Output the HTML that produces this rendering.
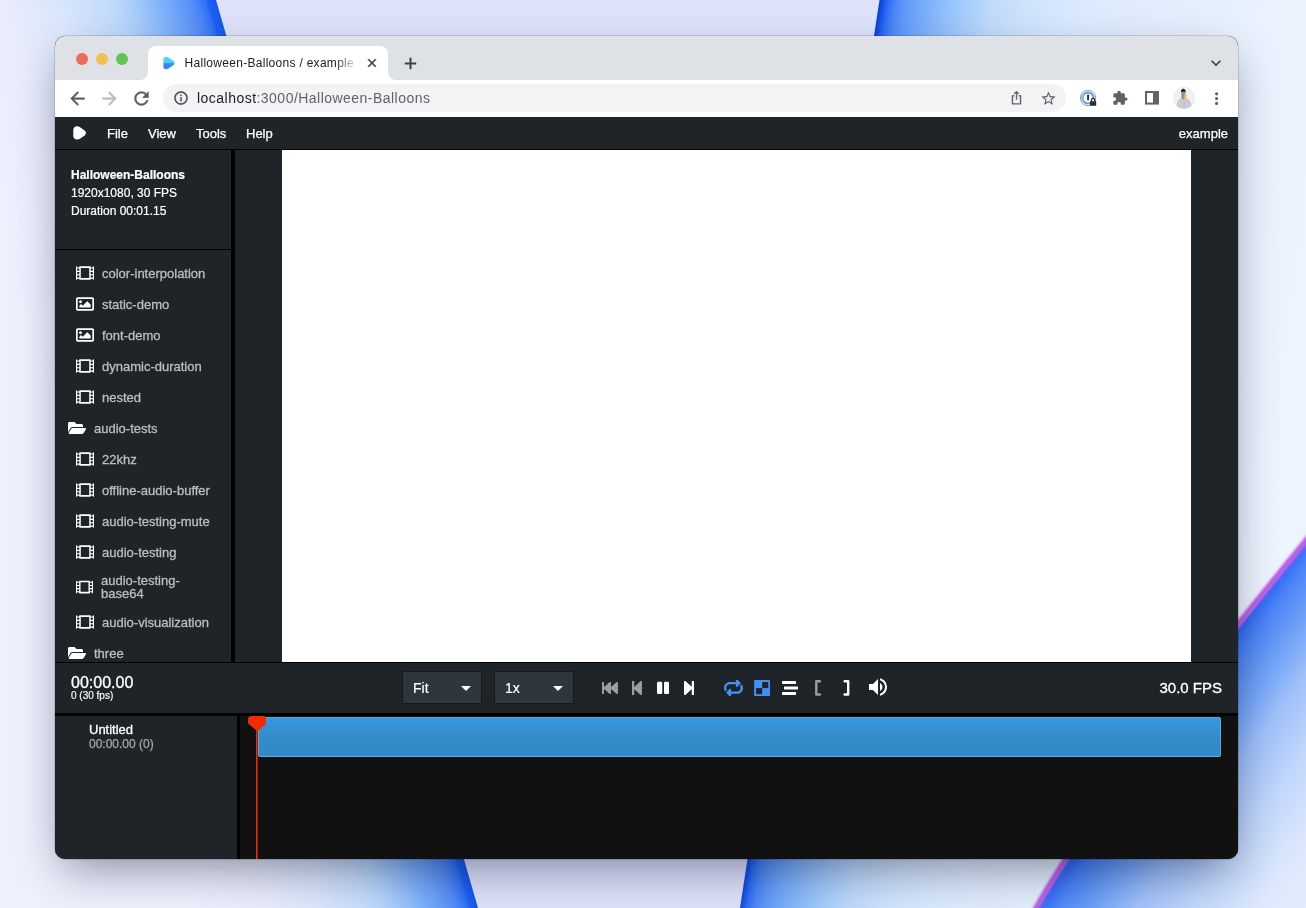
<!DOCTYPE html>
<html>
<head>
<meta charset="utf-8">
<style>
*{box-sizing:border-box;margin:0;padding:0}
html,body{width:1306px;height:908px;overflow:hidden;background:#e6eafc;font-family:"Liberation Sans",sans-serif;}
.abs{position:absolute}
#wall{position:absolute;left:0;top:0;width:1306px;height:908px}
#win{will-change:transform;position:absolute;left:55px;top:36px;width:1183px;height:823px;border-radius:10px;overflow:hidden;background:#1f2428;box-shadow:0 0 0 0.5px rgba(0,0,0,.25),0 17px 46px -8px rgba(0,8,32,.43);}
/* chrome */
#tabstrip{position:absolute;left:0;top:0;width:1183px;height:44px;background:#dee1e6}
#toolbar{position:absolute;left:0;top:44px;width:1183px;height:37px;background:#fff}
.dot{position:absolute;top:17px;width:12px;height:12px;border-radius:50%}
#tab{position:absolute;left:93px;top:10px;width:240px;height:34px;background:#fff;border-radius:8px 8px 0 0}
#tab:before,#tab:after{content:"";position:absolute;bottom:0;width:8px;height:8px;background:radial-gradient(circle at 0 0,rgba(255,255,255,0) 7.5px,#fff 8.5px)}
#tab:before{left:-8px}
#tab:after{right:-8px;transform:scaleX(-1)}
#tabtitle{position:absolute;left:36.5px;top:10px;font-size:12px;color:#202124;white-space:nowrap;width:176px;overflow:hidden;letter-spacing:0.29px;-webkit-mask-image:linear-gradient(to right,#000 150px,transparent 174px);mask-image:linear-gradient(to right,#000 150px,transparent 174px)}
#omni{position:absolute;left:108px;top:48px;width:903px;height:28px;border-radius:14px;background:#f1f3f4}
#url{position:absolute;left:142px;top:54px;font-size:14px;color:#5f6368;white-space:nowrap;letter-spacing:0.47px}
#url b{font-weight:normal;color:#202124}
/* app */
#menubar{position:absolute;left:0;top:81px;width:1183px;height:33px;background:#1f2428;border-bottom:1px solid #000}
.menu{position:absolute;top:9px;font-size:13px;color:#fff;white-space:nowrap;-webkit-text-stroke:0.25px #fff}
#sidebar{position:absolute;left:0;top:114px;width:176px;height:512px;background:#1f2428}
#sidehead{position:absolute;left:0;top:0;width:176px;height:100px;border-bottom:1px solid #000}
#sidehead div{position:absolute;left:16px;font-size:12px;color:#fff;white-space:nowrap;line-height:14px;-webkit-text-stroke:0.2px #fff}
.item{position:absolute;left:47px;font-size:13px;color:#bcbec1;white-space:nowrap;line-height:13px;-webkit-text-stroke:0.3px #bcbec1}
.item.f{left:39px}
.ico{position:absolute;left:21px;width:18px;height:18px;fill:#fff}
.ico.fo{left:13px}
#split1{position:absolute;left:176px;top:114px;width:4px;height:512px;background:#000}
#canvasarea{position:absolute;left:180px;top:114px;width:1003px;height:512px;background:#1f2428}
#canvas{position:absolute;left:227px;top:114px;width:909px;height:512px;background:#fff}
#ctrl{position:absolute;left:0;top:626px;width:1183px;height:51px;background:#1f2428;box-shadow:inset 0 1px 0 #000}
.combo{position:absolute;top:9px;width:80px;height:33px;background:#2f363d;border:1px solid #16191c;font-size:14px;color:#fff;-webkit-text-stroke:0.2px #fff}
.combo span{position:absolute;left:10px;top:8px}
.combo i{position:absolute;right:10px;top:14px;width:0;height:0;border-left:5px solid transparent;border-right:5px solid transparent;border-top:5.5px solid #fff}
#split2{position:absolute;left:0;top:677px;width:1183px;height:3px;background:#000}
#tlleft{position:absolute;left:0;top:680px;width:182px;height:143px;background:#1f2428}
#split3{position:absolute;left:182px;top:680px;width:3px;height:143px;background:#000}
#track{position:absolute;left:185px;top:680px;width:998px;height:143px;background:#111}
#clip{position:absolute;left:203px;top:681px;width:963px;height:40px;border-radius:2px;background:linear-gradient(to bottom,#3697e1,#348ac7 60%);border:1px solid rgba(255,255,255,.22)}
#phline{position:absolute;left:201px;top:690px;width:2px;height:133px;background:linear-gradient(to right,#f02c00 1px,rgba(240,44,0,.55) 1px)}
</style>
</head>
<body>
<svg id="wall" viewBox="0 0 1306 908">
<defs>
<linearGradient id="gL" gradientUnits="userSpaceOnUse" x1="347" y1="454" x2="87.7" y2="529.1">
<stop offset="0" stop-color="#1556ee"/><stop offset="0.028" stop-color="#1f60f3"/><stop offset="0.037" stop-color="#2f70f5"/><stop offset="0.068" stop-color="#4a84f7"/><stop offset="0.1" stop-color="#5b92f8"/><stop offset="0.15" stop-color="#6ea3f9"/><stop offset="0.2" stop-color="#80b2fa"/><stop offset="0.25" stop-color="#95c0fb"/><stop offset="0.3" stop-color="#a8ccfb"/><stop offset="0.345" stop-color="#b8d6fc"/><stop offset="0.407" stop-color="#c6dcfc"/><stop offset="0.556" stop-color="#d9e6fc"/><stop offset="0.74" stop-color="#e8ecfc"/><stop offset="1" stop-color="#eef0fd"/>
</linearGradient>
<linearGradient id="gR" gradientUnits="userSpaceOnUse" x1="809.8" y1="454" x2="1284" y2="528">
<stop offset="0.0" stop-color="#0c44d8"/><stop offset="0.0083" stop-color="#1a58ee"/><stop offset="0.0167" stop-color="#2f6ef4"/><stop offset="0.0312" stop-color="#4a86f7"/><stop offset="0.0521" stop-color="#5f98f9"/><stop offset="0.0771" stop-color="#70a6fa"/><stop offset="0.1083" stop-color="#82b4fb"/><stop offset="0.1375" stop-color="#92c0fc"/><stop offset="0.1667" stop-color="#a0cafc"/><stop offset="0.2042" stop-color="#b2d4fd"/><stop offset="0.2292" stop-color="#bfdafc"/><stop offset="0.3125" stop-color="#d0e4fd"/><stop offset="0.4167" stop-color="#dbeafd"/><stop offset="0.625" stop-color="#e4eefd"/><stop offset="0.8333" stop-color="#eaf2fe"/><stop offset="1.0" stop-color="#eef4fe"/>
</linearGradient>
<linearGradient id="gP" gradientUnits="userSpaceOnUse" x1="1170" y1="724" x2="1396" y2="889">
<stop offset="0" stop-color="#2f68f4"/><stop offset="0.054" stop-color="#4a84f7"/><stop offset="0.143" stop-color="#6a9cf6"/><stop offset="0.196" stop-color="#7aaaf9"/><stop offset="0.286" stop-color="#9fc0f9"/><stop offset="0.446" stop-color="#c0d6fb"/><stop offset="0.657" stop-color="#dfe9fd"/><stop offset="1" stop-color="#e6effd"/>
</linearGradient>
<filter id="bl1"><feGaussianBlur stdDeviation="1.2"/></filter>
</defs>
<rect width="1306" height="908" fill="#dfe2fb"/>
<polygon points="0,0 216,0 478,908 0,908" fill="url(#gL)"/>
<polygon points="879.5,0 1306,0 1306,908 740,908" fill="url(#gR)"/>
<path d="M1306,543 Q1109.1,786 1038,908 L1306,908z" fill="url(#gP)"/>
<path d="M1310,536 Q1106,783 1034,912" fill="none" stroke="#b95fe8" stroke-width="6" filter="url(#bl1)"/>
</svg>

<div id="win">
  <div id="tabstrip">
    <div class="dot" style="left:21px;background:#ed6a5e"></div>
    <div class="dot" style="left:41px;background:#f4bf4f"></div>
    <div class="dot" style="left:61px;background:#61c554"></div>
    <div id="tab"><div id="tabtitle">Halloween-Balloons / example - R</div></div>
  </div>
  <div id="toolbar"></div>
  <div id="omni"></div>
  <div id="url"><b>localhost</b>:3000/Halloween-Balloons</div>

<svg class="abs" style="left:11.5px;top:51.5px" width="21" height="21" viewBox="0 0 24 24"><path fill="#5a5e63" stroke="#5a5e63" stroke-width="0.400" d="M20 11H7.830l5.590-5.590L12 4l-8 8 8 8 1.410-1.410L7.830 13H20v-2z"/></svg>
  <svg class="abs" style="left:43.5px;top:51.5px" width="21" height="21" viewBox="0 0 24 24"><path fill="#b7bbc0" stroke="#b7bbc0" stroke-width="0.400" d="M12 4l-1.410 1.410L16.170 11H4v2h12.170l-5.580 5.590L12 20l8-8z"/></svg>
  <svg class="abs" style="left:75.5px;top:51.5px" width="21" height="21" viewBox="0 0 24 24"><path fill="#5a5e63" stroke="#5a5e63" stroke-width="0.400" d="M17.650 6.350C16.200 4.900 14.210 4 12 4c-4.420 0-7.990 3.580-7.990 8s3.570 8 7.990 8c3.730 0 6.840-2.550 7.730-6h-2.080c-.820 2.330-3.040 4-5.650 4-3.310 0-6-2.690-6-6s2.690-6 6-6c1.660 0 3.140.690 4.220 1.780L13 11h7V4l-2.350 2.350z"/></svg>
  <svg class="abs" style="left:118.0px;top:54.0px" width="16" height="16" viewBox="0 0 24 24"><path fill="#45484c" stroke="#45484c" stroke-width="0.300" d="M11 7h2v2h-2zm0 4h2v6h-2zm1-9C6.480 2 2 6.480 2 12s4.480 10 10 10 10-4.480 10-10S17.520 2 12 2zm0 18c-4.410 0-8-3.590-8-8s3.590-8 8-8 8 3.590 8 8-3.590 8-8 8z"/></svg>
  <svg class="abs" style="left:984.5px;top:53.5px" width="17" height="17" viewBox="0 0 24 24"><path fill="#5f6368"  d="M22 9.240l-7.190-.620L12 2 9.190 8.630 2 9.240l5.460 4.730L5.820 21 12 17.270 18.180 21l-1.630-7.030L22 9.240zM12 15.400l-3.760 2.270 1-4.280-3.320-2.880 4.380-.380L12 6.100l1.710 4.040 4.380.380-3.320 2.880 1 4.280L12 15.400z"/></svg>
  <svg class="abs" style="left:1056.8px;top:53.8px" width="16.200" height="16.200" viewBox="0 0 24 24"><path fill="#5f6368"  d="M20.500 11H19V7c0-1.100-.900-2-2-2h-4V3.500C13 2.120 11.880 1 10.500 1S8 2.120 8 3.500V5H4c-1.100 0-1.990.900-1.990 2v3.800H3.500c1.490 0 2.700 1.210 2.700 2.700s-1.210 2.700-2.700 2.700H2V20c0 1.100.900 2 2 2h3.800v-1.500c0-1.490 1.210-2.700 2.700-2.700 1.490 0 2.700 1.210 2.700 2.700V22H17c1.100 0 2-.900 2-2v-4h1.500c1.380 0 2.500-1.120 2.500-2.500S21.880 11 20.500 11z"/></svg>
  <svg class="abs" style="left:1151.9px;top:52.7px" width="19.200" height="19.200" viewBox="0 0 24 24"><path fill="#5f6368"  d="M12 8c1.100 0 2-.900 2-2s-.900-2-2-2-2 .900-2 2 .900 2 2 2zm0 2c-1.100 0-2 .900-2 2s.900 2 2 2 2-.900 2-2-.900-2-2-2zm0 6c-1.100 0-2 .900-2 2s.900 2 2 2 2-.900 2-2-.900-2-2-2z"/></svg>
  <svg class="abs" style="left:310.0px;top:20.0px" width="14" height="14" viewBox="0 0 24 24"><path fill="#3c4043" stroke="#3c4043" stroke-width="0.900" d="M19 6.410L17.590 5 12 10.590 6.410 5 5 6.410 10.590 12 5 17.590 6.410 19 12 13.410 17.590 19 19 17.590 13.410 12z"/></svg>
  <svg class="abs" style="left:345.5px;top:17.5px" width="19" height="19" viewBox="0 0 24 24"><path fill="#3c4043" stroke="#3c4043" stroke-width="0.500" d="M19 13h-6v6h-2v-6H5v-2h6V5h2v6h6v2z"/></svg>
  <svg class="abs" style="left:1151.0px;top:16.5px" width="20" height="20" viewBox="0 0 24 24"><path fill="#3c4043"  d="M7.410 8.590L12 13.170l4.590-4.580L18 10l-6 6-6-6 1.410-1.410z"/></svg>
  <svg class="abs" style="left:954.5px;top:53.7px" width="13" height="16" viewBox="0 0 16 19"><path fill="none" stroke="#5f6368" stroke-width="1.700" stroke-linejoin="round" d="M5.200 6.800H3.600Q3 6.800 3 7.400V16.200Q3 16.800 3.600 16.800H12.400Q13 16.800 13 16.200V7.400Q13 6.800 12.400 6.800H10.800M8 11.500V1.800M5.200 4.400L8 1.700 10.800 4.400"/></svg>
  <svg class="abs" style="left:1090px;top:55px" width="14" height="14" viewBox="0 0 14 14"><rect x="1" y="1" width="12" height="11.600" fill="none" stroke="#5f6368" stroke-width="2"/><rect x="8" y="1" width="5" height="11.600" fill="#5f6368"/></svg>
  <svg class="abs" style="left:1024px;top:53px" width="20" height="20" viewBox="0 0 20 20"><circle cx="9" cy="9" r="7.700" fill="#fff" stroke="#7f858d" stroke-width="0.800"/><circle cx="9" cy="9" r="5.500" fill="#fff" stroke="#5a9bea" stroke-width="2"/><path d="M4.200 12A5.500 5.500 0 0 1 5 5" fill="none" stroke="#86b6f2" stroke-width="2"/><rect x="8.100" y="5.600" width="1.900" height="5.600" rx="0.500" fill="#2a3038"/><rect x="11" y="12" width="6.200" height="4.800" rx="0.900" fill="#2a2e35"/><path d="M12.500 12.300v-1.300a1.600 1.600 0 0 1 3.200 0v1.300" fill="#eef1f6" stroke="#2a2e35" stroke-width="1.300"/></svg>
  <svg class="abs" style="left:1118px;top:50.8px" width="22" height="22" viewBox="0 0 22 22"><defs><clipPath id="av"><circle cx="11" cy="11" r="10.900"/></clipPath></defs><g clip-path="url(#av)"><rect width="22" height="22" fill="#f1f1f2"/><path d="M8.300 11.300C5.200 12.300 3.600 15 3.100 22L18.900 22C18.400 15 16.800 12.300 13.200 11.300z" fill="#c3c6cb"/><path d="M6.500 14v8M9 13v9M13.500 13v9M16 14.500v7.500" stroke="#d9dbde" stroke-width="0.700" fill="none"/><rect x="8.300" y="3.600" width="4" height="8.700" rx="1.700" fill="#8f9297"/><path d="M7.900 5.400C7.700 0.600 12.900 0.600 12.700 5.400 11.500 4.300 9.100 4.300 7.900 5.400z" fill="#17181a"/><rect x="11.100" y="7" width="2.200" height="5.300" rx="0.800" fill="#f3b44c"/></g><circle cx="11" cy="11" r="10.700" fill="none" stroke="#e4e5e7" stroke-width="0.500"/></svg>
  <svg class="abs" style="left:106px;top:19.100px" width="16" height="16" viewBox="-1 -1 16 16"><defs><linearGradient id="fv" x1="0" y1="0" x2="0" y2="1"><stop offset="0" stop-color="#52daf2"/><stop offset="0.450" stop-color="#4fd0f2"/><stop offset="0.550" stop-color="#3f8df3"/><stop offset="1" stop-color="#3a78f6"/></linearGradient><filter id="fb" x="-20%" y="-20%" width="140%" height="140%"><feGaussianBlur stdDeviation="0.550"/></filter></defs><path filter="url(#fb)" fill="url(#fv)" d="M4 0.800C5.300 0.800 6.600 1.500 8 2.500L11.200 4.800C13 6.100 13 7.900 11.200 9.200L8 11.500C6.600 12.500 5.300 13.200 4 13.200C2.300 13.200 1.400 12 1.400 10.200L1.400 3.800C1.400 2 2.300 0.800 4 0.800z"/></svg>
  <div id="menubar">
    <svg class="abs" style="left:17.6px;top:9px" width="14" height="14" viewBox="0 0 14 14"><path fill="#fff" d="M4 0.300C5.500 0.300 7 1.200 8.500 2.200L11.600 4.600C13.400 6 13.400 8 11.600 9.400L8.500 11.700C7 12.800 5.500 13.500 4 13.500C1.800 13.500 0.300 12 0.300 10L0.300 4C0.300 1.800 1.800 0.300 4 0.300z"/></svg>
    <div class="menu" style="left:52px">File</div>
    <div class="menu" style="left:93px">View</div>
    <div class="menu" style="left:141px">Tools</div>
    <div class="menu" style="left:191px">Help</div>
    <div class="menu" style="right:10px">example</div>
  </div>

  <div id="sidebar">
    <div id="sidehead">
      <div style="top:18px;font-weight:bold">Halloween-Balloons</div>
      <div style="top:36px">1920x1080, 30 FPS</div>
      <div style="top:54px">Duration 00:01.15</div>
    </div>
    <svg class="ico" style="top:113.5px" viewBox="0 0 512 512"><path fill-rule="evenodd" d="M24 64h8v20a12 12 0 0 0 12 12h40a12 12 0 0 0 12-12V64h320v20a12 12 0 0 0 12 12h40a12 12 0 0 0 12-12V64h8a24 24 0 0 1 24 24v336a24 24 0 0 1-24 24h-8v-20a12 12 0 0 0-12-12h-40a12 12 0 0 0-12 12v20H96v-20a12 12 0 0 0-12-12H44a12 12 0 0 0-12 12v20h-8a24 24 0 0 1-24-24V88a24 24 0 0 1 24-24zM44 128h40a12 12 0 0 1 12 12v40a12 12 0 0 1-12 12H44a12 12 0 0 1-12-12v-40a12 12 0 0 1 12-12zM44 224h40a12 12 0 0 1 12 12v40a12 12 0 0 1-12 12H44a12 12 0 0 1-12-12v-40a12 12 0 0 1 12-12zM44 320h40a12 12 0 0 1 12 12v40a12 12 0 0 1-12 12H44a12 12 0 0 1-12-12v-40a12 12 0 0 1 12-12zM428 128h40a12 12 0 0 1 12 12v40a12 12 0 0 1-12 12h-40a12 12 0 0 1-12-12v-40a12 12 0 0 1 12-12zM428 224h40a12 12 0 0 1 12 12v40a12 12 0 0 1-12 12h-40a12 12 0 0 1-12-12v-40a12 12 0 0 1 12-12zM428 320h40a12 12 0 0 1 12 12v40a12 12 0 0 1-12 12h-40a12 12 0 0 1-12-12v-40a12 12 0 0 1 12-12zM148 112h216a12 12 0 0 1 12 12v264a12 12 0 0 1-12 12H148a12 12 0 0 1-12-12V124a12 12 0 0 1 12-12z"/></svg>
    <div class="item" style="top:116.5px">color-interpolation</div>
    <svg class="ico" style="top:144.5px" viewBox="0 0 512 512"><path d="M464 64H48C21.490 64 0 85.490 0 112v288c0 26.510 21.490 48 48 48h416c26.510 0 48-21.490 48-48V112c0-26.510-21.490-48-48-48zm-6 336H54a6 6 0 0 1-6-6V118a6 6 0 0 1 6-6h404a6 6 0 0 1 6 6v276a6 6 0 0 1-6 6zM128 152c-22.091 0-40 17.909-40 40s17.909 40 40 40 40-17.909 40-40-17.909-40-40-40zM96 352h320v-80l-87.515-87.515c-4.686-4.686-12.284-4.686-16.971 0L192 304l-39.515-39.515c-4.686-4.686-12.284-4.686-16.971 0L96 304v48z"/></svg>
    <div class="item" style="top:147.5px">static-demo</div>
    <svg class="ico" style="top:175.5px" viewBox="0 0 512 512"><path d="M464 64H48C21.490 64 0 85.490 0 112v288c0 26.510 21.490 48 48 48h416c26.510 0 48-21.490 48-48V112c0-26.510-21.490-48-48-48zm-6 336H54a6 6 0 0 1-6-6V118a6 6 0 0 1 6-6h404a6 6 0 0 1 6 6v276a6 6 0 0 1-6 6zM128 152c-22.091 0-40 17.909-40 40s17.909 40 40 40 40-17.909 40-40-17.909-40-40-40zM96 352h320v-80l-87.515-87.515c-4.686-4.686-12.284-4.686-16.971 0L192 304l-39.515-39.515c-4.686-4.686-12.284-4.686-16.971 0L96 304v48z"/></svg>
    <div class="item" style="top:178.5px">font-demo</div>
    <svg class="ico" style="top:206.5px" viewBox="0 0 512 512"><path fill-rule="evenodd" d="M24 64h8v20a12 12 0 0 0 12 12h40a12 12 0 0 0 12-12V64h320v20a12 12 0 0 0 12 12h40a12 12 0 0 0 12-12V64h8a24 24 0 0 1 24 24v336a24 24 0 0 1-24 24h-8v-20a12 12 0 0 0-12-12h-40a12 12 0 0 0-12 12v20H96v-20a12 12 0 0 0-12-12H44a12 12 0 0 0-12 12v20h-8a24 24 0 0 1-24-24V88a24 24 0 0 1 24-24zM44 128h40a12 12 0 0 1 12 12v40a12 12 0 0 1-12 12H44a12 12 0 0 1-12-12v-40a12 12 0 0 1 12-12zM44 224h40a12 12 0 0 1 12 12v40a12 12 0 0 1-12 12H44a12 12 0 0 1-12-12v-40a12 12 0 0 1 12-12zM44 320h40a12 12 0 0 1 12 12v40a12 12 0 0 1-12 12H44a12 12 0 0 1-12-12v-40a12 12 0 0 1 12-12zM428 128h40a12 12 0 0 1 12 12v40a12 12 0 0 1-12 12h-40a12 12 0 0 1-12-12v-40a12 12 0 0 1 12-12zM428 224h40a12 12 0 0 1 12 12v40a12 12 0 0 1-12 12h-40a12 12 0 0 1-12-12v-40a12 12 0 0 1 12-12zM428 320h40a12 12 0 0 1 12 12v40a12 12 0 0 1-12 12h-40a12 12 0 0 1-12-12v-40a12 12 0 0 1 12-12zM148 112h216a12 12 0 0 1 12 12v264a12 12 0 0 1-12 12H148a12 12 0 0 1-12-12V124a12 12 0 0 1 12-12z"/></svg>
    <div class="item" style="top:209.5px">dynamic-duration</div>
    <svg class="ico" style="top:237.5px" viewBox="0 0 512 512"><path fill-rule="evenodd" d="M24 64h8v20a12 12 0 0 0 12 12h40a12 12 0 0 0 12-12V64h320v20a12 12 0 0 0 12 12h40a12 12 0 0 0 12-12V64h8a24 24 0 0 1 24 24v336a24 24 0 0 1-24 24h-8v-20a12 12 0 0 0-12-12h-40a12 12 0 0 0-12 12v20H96v-20a12 12 0 0 0-12-12H44a12 12 0 0 0-12 12v20h-8a24 24 0 0 1-24-24V88a24 24 0 0 1 24-24zM44 128h40a12 12 0 0 1 12 12v40a12 12 0 0 1-12 12H44a12 12 0 0 1-12-12v-40a12 12 0 0 1 12-12zM44 224h40a12 12 0 0 1 12 12v40a12 12 0 0 1-12 12H44a12 12 0 0 1-12-12v-40a12 12 0 0 1 12-12zM44 320h40a12 12 0 0 1 12 12v40a12 12 0 0 1-12 12H44a12 12 0 0 1-12-12v-40a12 12 0 0 1 12-12zM428 128h40a12 12 0 0 1 12 12v40a12 12 0 0 1-12 12h-40a12 12 0 0 1-12-12v-40a12 12 0 0 1 12-12zM428 224h40a12 12 0 0 1 12 12v40a12 12 0 0 1-12 12h-40a12 12 0 0 1-12-12v-40a12 12 0 0 1 12-12zM428 320h40a12 12 0 0 1 12 12v40a12 12 0 0 1-12 12h-40a12 12 0 0 1-12-12v-40a12 12 0 0 1 12-12zM148 112h216a12 12 0 0 1 12 12v264a12 12 0 0 1-12 12H148a12 12 0 0 1-12-12V124a12 12 0 0 1 12-12z"/></svg>
    <div class="item" style="top:240.5px">nested</div>
    <svg class="ico fo" style="top:268.5px" viewBox="0 0 576 512"><path d="M572.694 292.093L500.270 416.248A63.997 63.997 0 0 1 444.989 448H45.025c-18.523 0-30.064-20.093-20.731-36.093l72.424-124.155A64 64 0 0 1 152 256h399.964c18.523 0 30.064 20.093 20.730 36.093zM152 224h328v-48c0-26.510-21.490-48-48-48H272l-64-64H48C21.490 64 0 85.490 0 112v278.046l69.077-118.418C86.214 242.250 117.989 224 152 224z"/></svg>
    <div class="item f" style="top:271.5px">audio-tests</div>
    <svg class="ico" style="top:299.5px" viewBox="0 0 512 512"><path fill-rule="evenodd" d="M24 64h8v20a12 12 0 0 0 12 12h40a12 12 0 0 0 12-12V64h320v20a12 12 0 0 0 12 12h40a12 12 0 0 0 12-12V64h8a24 24 0 0 1 24 24v336a24 24 0 0 1-24 24h-8v-20a12 12 0 0 0-12-12h-40a12 12 0 0 0-12 12v20H96v-20a12 12 0 0 0-12-12H44a12 12 0 0 0-12 12v20h-8a24 24 0 0 1-24-24V88a24 24 0 0 1 24-24zM44 128h40a12 12 0 0 1 12 12v40a12 12 0 0 1-12 12H44a12 12 0 0 1-12-12v-40a12 12 0 0 1 12-12zM44 224h40a12 12 0 0 1 12 12v40a12 12 0 0 1-12 12H44a12 12 0 0 1-12-12v-40a12 12 0 0 1 12-12zM44 320h40a12 12 0 0 1 12 12v40a12 12 0 0 1-12 12H44a12 12 0 0 1-12-12v-40a12 12 0 0 1 12-12zM428 128h40a12 12 0 0 1 12 12v40a12 12 0 0 1-12 12h-40a12 12 0 0 1-12-12v-40a12 12 0 0 1 12-12zM428 224h40a12 12 0 0 1 12 12v40a12 12 0 0 1-12 12h-40a12 12 0 0 1-12-12v-40a12 12 0 0 1 12-12zM428 320h40a12 12 0 0 1 12 12v40a12 12 0 0 1-12 12h-40a12 12 0 0 1-12-12v-40a12 12 0 0 1 12-12zM148 112h216a12 12 0 0 1 12 12v264a12 12 0 0 1-12 12H148a12 12 0 0 1-12-12V124a12 12 0 0 1 12-12z"/></svg>
    <div class="item" style="top:302.5px">22khz</div>
    <svg class="ico" style="top:330.5px" viewBox="0 0 512 512"><path fill-rule="evenodd" d="M24 64h8v20a12 12 0 0 0 12 12h40a12 12 0 0 0 12-12V64h320v20a12 12 0 0 0 12 12h40a12 12 0 0 0 12-12V64h8a24 24 0 0 1 24 24v336a24 24 0 0 1-24 24h-8v-20a12 12 0 0 0-12-12h-40a12 12 0 0 0-12 12v20H96v-20a12 12 0 0 0-12-12H44a12 12 0 0 0-12 12v20h-8a24 24 0 0 1-24-24V88a24 24 0 0 1 24-24zM44 128h40a12 12 0 0 1 12 12v40a12 12 0 0 1-12 12H44a12 12 0 0 1-12-12v-40a12 12 0 0 1 12-12zM44 224h40a12 12 0 0 1 12 12v40a12 12 0 0 1-12 12H44a12 12 0 0 1-12-12v-40a12 12 0 0 1 12-12zM44 320h40a12 12 0 0 1 12 12v40a12 12 0 0 1-12 12H44a12 12 0 0 1-12-12v-40a12 12 0 0 1 12-12zM428 128h40a12 12 0 0 1 12 12v40a12 12 0 0 1-12 12h-40a12 12 0 0 1-12-12v-40a12 12 0 0 1 12-12zM428 224h40a12 12 0 0 1 12 12v40a12 12 0 0 1-12 12h-40a12 12 0 0 1-12-12v-40a12 12 0 0 1 12-12zM428 320h40a12 12 0 0 1 12 12v40a12 12 0 0 1-12 12h-40a12 12 0 0 1-12-12v-40a12 12 0 0 1 12-12zM148 112h216a12 12 0 0 1 12 12v264a12 12 0 0 1-12 12H148a12 12 0 0 1-12-12V124a12 12 0 0 1 12-12z"/></svg>
    <div class="item" style="top:333.5px">offline-audio-buffer</div>
    <svg class="ico" style="top:361.5px" viewBox="0 0 512 512"><path fill-rule="evenodd" d="M24 64h8v20a12 12 0 0 0 12 12h40a12 12 0 0 0 12-12V64h320v20a12 12 0 0 0 12 12h40a12 12 0 0 0 12-12V64h8a24 24 0 0 1 24 24v336a24 24 0 0 1-24 24h-8v-20a12 12 0 0 0-12-12h-40a12 12 0 0 0-12 12v20H96v-20a12 12 0 0 0-12-12H44a12 12 0 0 0-12 12v20h-8a24 24 0 0 1-24-24V88a24 24 0 0 1 24-24zM44 128h40a12 12 0 0 1 12 12v40a12 12 0 0 1-12 12H44a12 12 0 0 1-12-12v-40a12 12 0 0 1 12-12zM44 224h40a12 12 0 0 1 12 12v40a12 12 0 0 1-12 12H44a12 12 0 0 1-12-12v-40a12 12 0 0 1 12-12zM44 320h40a12 12 0 0 1 12 12v40a12 12 0 0 1-12 12H44a12 12 0 0 1-12-12v-40a12 12 0 0 1 12-12zM428 128h40a12 12 0 0 1 12 12v40a12 12 0 0 1-12 12h-40a12 12 0 0 1-12-12v-40a12 12 0 0 1 12-12zM428 224h40a12 12 0 0 1 12 12v40a12 12 0 0 1-12 12h-40a12 12 0 0 1-12-12v-40a12 12 0 0 1 12-12zM428 320h40a12 12 0 0 1 12 12v40a12 12 0 0 1-12 12h-40a12 12 0 0 1-12-12v-40a12 12 0 0 1 12-12zM148 112h216a12 12 0 0 1 12 12v264a12 12 0 0 1-12 12H148a12 12 0 0 1-12-12V124a12 12 0 0 1 12-12z"/></svg>
    <div class="item" style="top:364.5px">audio-testing-mute</div>
    <svg class="ico" style="top:392.5px" viewBox="0 0 512 512"><path fill-rule="evenodd" d="M24 64h8v20a12 12 0 0 0 12 12h40a12 12 0 0 0 12-12V64h320v20a12 12 0 0 0 12 12h40a12 12 0 0 0 12-12V64h8a24 24 0 0 1 24 24v336a24 24 0 0 1-24 24h-8v-20a12 12 0 0 0-12-12h-40a12 12 0 0 0-12 12v20H96v-20a12 12 0 0 0-12-12H44a12 12 0 0 0-12 12v20h-8a24 24 0 0 1-24-24V88a24 24 0 0 1 24-24zM44 128h40a12 12 0 0 1 12 12v40a12 12 0 0 1-12 12H44a12 12 0 0 1-12-12v-40a12 12 0 0 1 12-12zM44 224h40a12 12 0 0 1 12 12v40a12 12 0 0 1-12 12H44a12 12 0 0 1-12-12v-40a12 12 0 0 1 12-12zM44 320h40a12 12 0 0 1 12 12v40a12 12 0 0 1-12 12H44a12 12 0 0 1-12-12v-40a12 12 0 0 1 12-12zM428 128h40a12 12 0 0 1 12 12v40a12 12 0 0 1-12 12h-40a12 12 0 0 1-12-12v-40a12 12 0 0 1 12-12zM428 224h40a12 12 0 0 1 12 12v40a12 12 0 0 1-12 12h-40a12 12 0 0 1-12-12v-40a12 12 0 0 1 12-12zM428 320h40a12 12 0 0 1 12 12v40a12 12 0 0 1-12 12h-40a12 12 0 0 1-12-12v-40a12 12 0 0 1 12-12zM148 112h216a12 12 0 0 1 12 12v264a12 12 0 0 1-12 12H148a12 12 0 0 1-12-12V124a12 12 0 0 1 12-12z"/></svg>
    <div class="item" style="top:395.5px">audio-testing</div>
    <svg class="ico" style="top:428.0px;width:17px" viewBox="0 0 512 512"><path fill-rule="evenodd" d="M24 64h8v20a12 12 0 0 0 12 12h40a12 12 0 0 0 12-12V64h320v20a12 12 0 0 0 12 12h40a12 12 0 0 0 12-12V64h8a24 24 0 0 1 24 24v336a24 24 0 0 1-24 24h-8v-20a12 12 0 0 0-12-12h-40a12 12 0 0 0-12 12v20H96v-20a12 12 0 0 0-12-12H44a12 12 0 0 0-12 12v20h-8a24 24 0 0 1-24-24V88a24 24 0 0 1 24-24zM44 128h40a12 12 0 0 1 12 12v40a12 12 0 0 1-12 12H44a12 12 0 0 1-12-12v-40a12 12 0 0 1 12-12zM44 224h40a12 12 0 0 1 12 12v40a12 12 0 0 1-12 12H44a12 12 0 0 1-12-12v-40a12 12 0 0 1 12-12zM44 320h40a12 12 0 0 1 12 12v40a12 12 0 0 1-12 12H44a12 12 0 0 1-12-12v-40a12 12 0 0 1 12-12zM428 128h40a12 12 0 0 1 12 12v40a12 12 0 0 1-12 12h-40a12 12 0 0 1-12-12v-40a12 12 0 0 1 12-12zM428 224h40a12 12 0 0 1 12 12v40a12 12 0 0 1-12 12h-40a12 12 0 0 1-12-12v-40a12 12 0 0 1 12-12zM428 320h40a12 12 0 0 1 12 12v40a12 12 0 0 1-12 12h-40a12 12 0 0 1-12-12v-40a12 12 0 0 1 12-12zM148 112h216a12 12 0 0 1 12 12v264a12 12 0 0 1-12 12H148a12 12 0 0 1-12-12V124a12 12 0 0 1 12-12z"/></svg>
    <div class="item" style="top:423.5px;left:46px">audio-testing-<br>base64</div>
    <svg class="ico" style="top:462.5px" viewBox="0 0 512 512"><path fill-rule="evenodd" d="M24 64h8v20a12 12 0 0 0 12 12h40a12 12 0 0 0 12-12V64h320v20a12 12 0 0 0 12 12h40a12 12 0 0 0 12-12V64h8a24 24 0 0 1 24 24v336a24 24 0 0 1-24 24h-8v-20a12 12 0 0 0-12-12h-40a12 12 0 0 0-12 12v20H96v-20a12 12 0 0 0-12-12H44a12 12 0 0 0-12 12v20h-8a24 24 0 0 1-24-24V88a24 24 0 0 1 24-24zM44 128h40a12 12 0 0 1 12 12v40a12 12 0 0 1-12 12H44a12 12 0 0 1-12-12v-40a12 12 0 0 1 12-12zM44 224h40a12 12 0 0 1 12 12v40a12 12 0 0 1-12 12H44a12 12 0 0 1-12-12v-40a12 12 0 0 1 12-12zM44 320h40a12 12 0 0 1 12 12v40a12 12 0 0 1-12 12H44a12 12 0 0 1-12-12v-40a12 12 0 0 1 12-12zM428 128h40a12 12 0 0 1 12 12v40a12 12 0 0 1-12 12h-40a12 12 0 0 1-12-12v-40a12 12 0 0 1 12-12zM428 224h40a12 12 0 0 1 12 12v40a12 12 0 0 1-12 12h-40a12 12 0 0 1-12-12v-40a12 12 0 0 1 12-12zM428 320h40a12 12 0 0 1 12 12v40a12 12 0 0 1-12 12h-40a12 12 0 0 1-12-12v-40a12 12 0 0 1 12-12zM148 112h216a12 12 0 0 1 12 12v264a12 12 0 0 1-12 12H148a12 12 0 0 1-12-12V124a12 12 0 0 1 12-12z"/></svg>
    <div class="item" style="top:465.5px">audio-visualization</div>
    <svg class="ico fo" style="top:493.5px" viewBox="0 0 576 512"><path d="M572.694 292.093L500.270 416.248A63.997 63.997 0 0 1 444.989 448H45.025c-18.523 0-30.064-20.093-20.731-36.093l72.424-124.155A64 64 0 0 1 152 256h399.964c18.523 0 30.064 20.093 20.730 36.093zM152 224h328v-48c0-26.510-21.490-48-48-48H272l-64-64H48C21.490 64 0 85.490 0 112v278.046l69.077-118.418C86.214 242.250 117.989 224 152 224z"/></svg>
    <div class="item f" style="top:496.5px">three</div>
  </div>
  <div id="split1"></div>
  <div id="canvasarea"></div>
  <div id="canvas"></div>

  <div id="ctrl">
    <div class="combo" style="left:347px"><span>Fit</span><i></i></div>
    <div class="combo" style="left:439px"><span>1x</span><i></i></div>
    <div class="abs" style="left:16px;top:12.5px;font-size:16px;color:#fff;line-height:16px;white-space:nowrap;-webkit-text-stroke:0.3px #fff">00:00.00</div>
    <div class="abs" style="left:16px;top:28.5px;font-size:10px;color:#fff;line-height:10px;white-space:nowrap;-webkit-text-stroke:0.15px #fff">0 (30 fps)</div>
    <div class="abs" style="right:16px;top:18px;font-size:15px;color:#fff;line-height:15px;white-space:nowrap;-webkit-text-stroke:0.3px #fff">30.0 FPS</div>
    <svg class="abs" style="left:547px;top:18.200000000000045px" width="16" height="16" viewBox="0 0 512 512"><path fill="#9a9da1" d="M0 436V76c0-6.600 5.400-12 12-12h40c6.600 0 12 5.400 12 12v151.900L235.500 71.400C256.100 54.300 288 68.600 288 96v131.900L459.500 71.400C480.100 54.300 512 68.600 512 96v320c0 27.400-31.900 41.700-52.500 24.600L288 285.300V416c0 27.400-31.900 41.700-52.500 24.600L64 285.300V436c0 6.600-5.400 12-12 12H12c-6.600 0-12-5.400-12-12z"/></svg>
    <svg class="abs" style="left:575.1px;top:18px" width="14" height="16" viewBox="0 0 448 512"><path fill="#9a9da1" d="M64 468V44c0-6.600 5.400-12 12-12h48c6.600 0 12 5.400 12 12v176.400l195.500-181C352.100 22.300 384 36.600 384 64v384c0 27.400-31.900 41.700-52.500 24.600L136 292.700V468c0 6.600-5.400 12-12 12H76c-6.600 0-12-5.400-12-12z"/></svg>
    <svg class="abs" style="left:601.6px;top:18.700000000000045px" width="12.25" height="14" viewBox="0 0 448 512"><path fill="#fff" d="M144 479H48c-26.500 0-48-21.500-48-48V79c0-26.500 21.500-48 48-48h96c26.500 0 48 21.500 48 48v352c0 26.500-21.500 48-48 48zm304-48V79c0-26.500-21.500-48-48-48h-96c-26.500 0-48 21.500-48 48v352c0 26.500 21.500 48 48 48h96c26.500 0 48-21.500 48-48z"/></svg>
    <svg class="abs" style="left:627.3px;top:18px" width="14" height="16" viewBox="0 0 448 512"><path fill="#fff" d="M384 44v424c0 6.600-5.400 12-12 12h-48c-6.600 0-12-5.400-12-12V291.600l-195.500 181C95.900 489.700 64 475.400 64 448V64c0-27.400 31.900-41.700 52.500-24.600L312 219.300V44c0-6.600 5.400-12 12-12h48c6.600 0 12 5.400 12 12z"/></svg>
    <svg class="abs" style="left:668.8px;top:18px" width="19" height="16" viewBox="0 0 512 431"><path fill="#4290f5" d="M493.500 138.500c12 22.600 18.700 48.400 18.500 75.700C511.300 302.400 438.600 373 350.400 373H192v47.500c0 22.500-26.200 32.300-41 17.500l-80-80c-9.400-9.400-9.400-24.600 0-33.900l80-80c15.100-15.100 41-4.400 41 16.900v48h158.900c52.800 0 96.600-42.200 97.100-95 .2-15-3.200-29.300-9.200-42-4.400-9.200-2.400-20.100 4.800-27.300l11.900-11.800c11.400-11.400 30.600-8.600 38.100 5.600zM64 212c.5-52.800 44.300-95 97.100-95H320v47.500c0 22.400 26.100 32.300 41 17.500l80-80c9.400-9.400 9.400-24.600 0-33.900l-80-80C346-26.900 320-16.700 320 5.500V53H161.600C73.400 53 .7 123.600 0 211.800c-.2 27.300 6.500 53.100 18.500 75.700 7.500 14.200 26.700 16.900 38.100 5.600l11.900-11.800c7.200-7.200 9.200-18.100 4.800-27.300-6-12.700-9.400-27-9.200-42z"/></svg>
    <svg class="abs" style="left:699px;top:17.799999999999955px" width="16.4" height="16.2" viewBox="0 0 16 16"><rect width="16" height="16" rx="1.2" fill="#4290f5"/><rect x="8" y="2" width="6" height="6" fill="#1f2428"/><rect x="2" y="8" width="6" height="6" fill="#1f2428"/></svg>
    <svg class="abs" style="left:727px;top:18px" width="16" height="16" viewBox="0 0 512 512"><path fill="#fff" d="M16 128h416c8.840 0 16-7.160 16-16V48c0-8.840-7.160-16-16-16H16C7.160 32 0 39.160 0 48v64c0 8.840 7.160 16 16 16zm480 80H80c-8.840 0-16 7.160-16 16v64c0 8.840 7.160 16 16 16h416c8.840 0 16-7.160 16-16v-64c0-8.840-7.160-16-16-16zm-64 176H16c-8.840 0-16 7.160-16 16v64c0 8.840 7.160 16 16 16h416c8.840 0 16-7.160 16-16v-64c0-8.840-7.160-16-16-16z"/></svg>
    <svg class="abs" style="left:759.7px;top:18.100000000000023px" width="7" height="16" viewBox="0 0 7 16"><path fill="none" stroke="#9a9da1" stroke-width="2.4" stroke-linecap="round" stroke-linejoin="round" d="M4.900 1.300H1.300V14.500H4.900"/></svg>
    <svg class="abs" style="left:787.6px;top:18.100000000000023px" width="7" height="16" viewBox="0 0 7 16"><path fill="none" stroke="#fff" stroke-width="2.4" stroke-linecap="round" stroke-linejoin="round" d="M1.600 1.300H5.200V14.500H1.600"/></svg>
    <svg class="abs" style="left:810.7px;top:13.200000000000045px" width="24" height="24" viewBox="0 0 24 24"><path fill="#fff" d="M3 9v6h4l5 5V4L7 9H3zm13.500 3c0-1.770-1.020-3.290-2.500-4.030v8.050c1.480-.730 2.500-2.250 2.500-4.020zM14 3.230v2.060c2.890.860 5 3.540 5 6.710s-2.110 5.850-5 6.710v2.060c4.010-.910 7-4.490 7-8.770s-2.990-7.860-7-8.770z"/></svg>
  </div>
  <div id="split2"></div>
  <div id="tlleft"><div class="abs" style="left:34px;top:7px;font-size:13px;line-height:13px;color:#fff;white-space:nowrap;-webkit-text-stroke:0.3px #fff">Untitled</div><div class="abs" style="left:34px;top:22px;font-size:12px;line-height:12px;color:#a6a7a9;white-space:nowrap;-webkit-text-stroke:0.25px #a6a7a9">00:00.00 (0)</div></div>
  <div id="split3"></div>
  <div id="track"></div>
  <div id="clip"></div>
  <div id="phline"></div>
  <svg class="abs" style="left:192.6px;top:679.6px" width="18.6" height="15" viewBox="0 0 18.6 15"><path fill="#f02c00" d="M3.2 0H15.4Q18.6 0 18.6 3.2V6.2Q18.6 7.6 17.5 8.5L10.3 14.4Q9.3 15.2 8.3 14.4L1.1 8.5Q0 7.600 0 6.200V3.200Q0 0 3.200 0z"/></svg>
</div>
</body>
</html>
